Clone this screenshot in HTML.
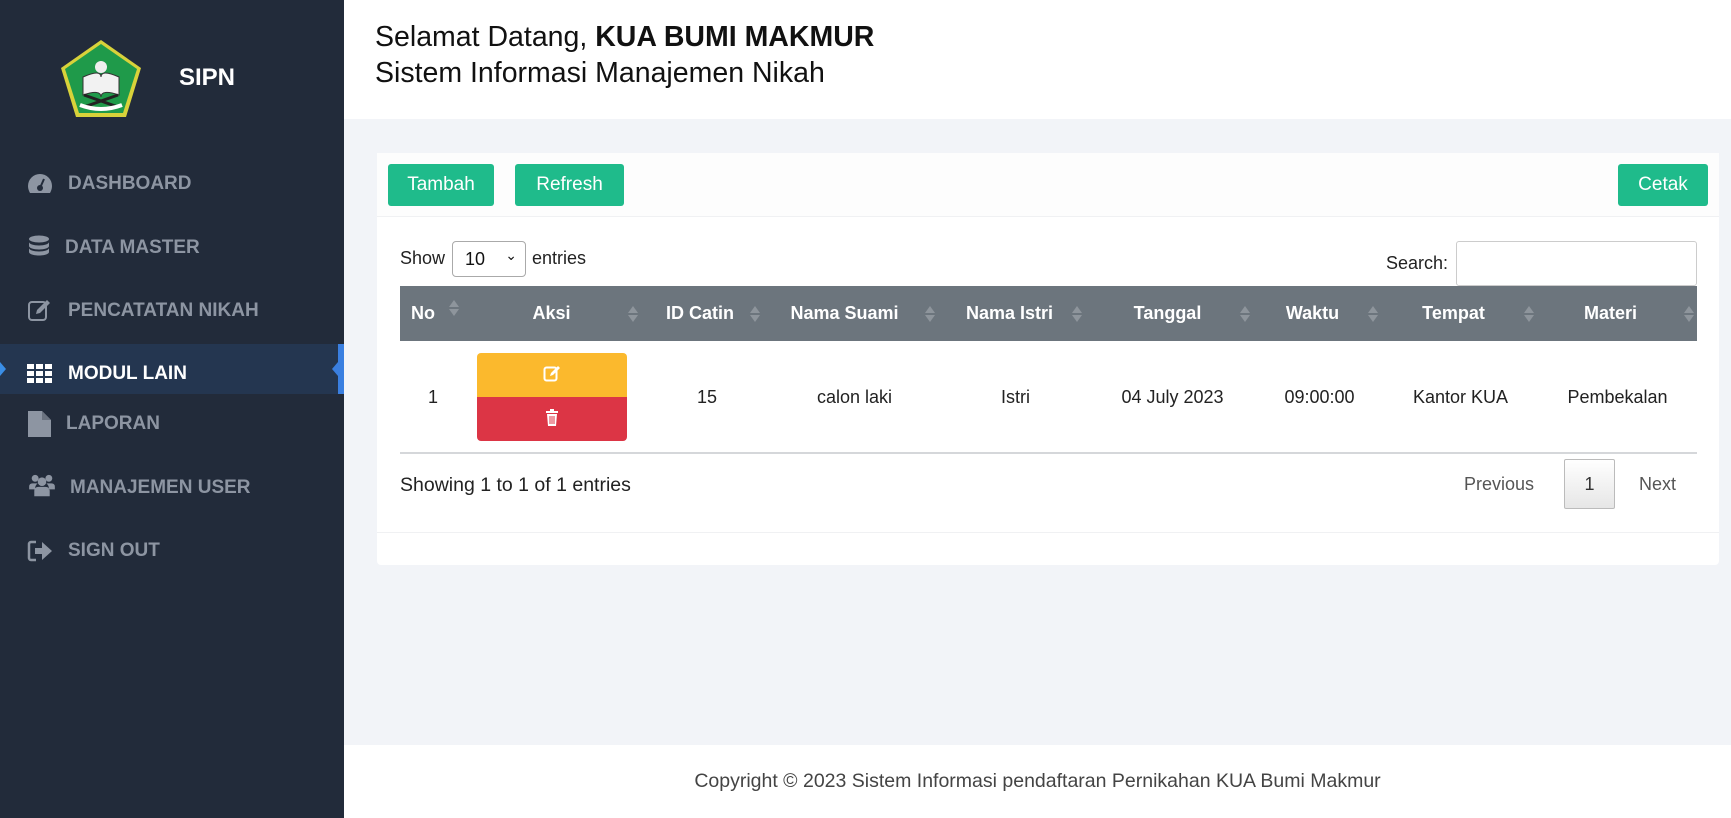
<!DOCTYPE html>
<html><head><meta charset="utf-8"><style>
*{box-sizing:border-box;margin:0;padding:0}
body{width:1731px;height:818px;overflow:hidden;font-family:"Liberation Sans",Arial,sans-serif;background:#f2f4f8;position:relative}
.abs{position:absolute}
#side{left:0;top:0;width:344px;height:818px;background:#222b3a}
.mi{position:absolute;left:68px;color:#8d95a2;font-weight:bold;font-size:19px;line-height:22px}
.ic{position:absolute;left:27px;width:26px;height:24px}
#hdr{left:344px;top:0;width:1387px;height:119px;background:#fff}
.t1{left:375px;font-size:28.5px;color:#111;line-height:32px}
#card{left:377px;top:153px;width:1342px;height:412px;background:#fff;border-radius:4px}
.btn{position:absolute;top:164px;height:42px;background:#1fbb8b;color:#fff;font-size:19px;line-height:42px;text-align:center;border-radius:3px}
.th{position:absolute;top:286px;height:55px;line-height:55px;color:#fff;font-weight:bold;font-size:18px;text-align:center}
.td{position:absolute;top:341px;height:112px;line-height:112px;color:#222;font-size:18px;text-align:center}
.sort{position:absolute;top:20px;width:10px;height:16px}
.sort:before{content:"";position:absolute;left:0;top:0;border:5px solid transparent;border-bottom:7px solid #8e959c;border-top:0}
.sort:after{content:"";position:absolute;left:0;top:9px;border:5px solid transparent;border-top:7px solid #8e959c;border-bottom:0}
</style></head><body>
<div id="side" class="abs"></div>
<svg class="abs" style="left:58px;top:37px" width="86" height="84" viewBox="0 0 86 84">
<polygon points="43,3 83,31 68,80 18,80 3,31" fill="#d8d23a"/>
<polygon points="43,7 79,32 65,76 21,76 7,32" fill="#1f9a4a"/>
<path d="M25 40 q18 -8 18 0 q0 -8 18 0 v18 q-18 -6 -18 2 q0 -8 -18 -2z" fill="#f2f2f2" stroke="#333" stroke-width="1"/>
<circle cx="43" cy="30" r="6" fill="#eee"/>
<path d="M26 70 l34 -12 M60 70 l-34 -12" stroke="#222" stroke-width="3"/>
<path d="M22 68 q21 8 42 0" stroke="#fff" stroke-width="4" fill="none"/>
</svg>
<div class="abs" style="left:179px;top:64px;color:#fff;font-weight:bold;font-size:24px">SIPN</div>

<svg class="ic" style="top:171px" viewBox="0 0 26 24"><path d="M13 3a12 12 0 0 0-12 12c0 3 1 5 2 7h20c1-2 2-4 2-7A12 12 0 0 0 13 3z" fill="#8d95a2"/><circle cx="13" cy="17" r="3" fill="#222b3a"/><path d="M13 17l4-9" stroke="#222b3a" stroke-width="2"/></svg>
<div class="mi" style="top:173px">DASHBOARD</div>
<svg class="ic" style="top:235px" viewBox="0 0 26 24"><ellipse cx="12" cy="4" rx="10" ry="3.5" fill="#8d95a2"/><path d="M2 7v4c0 2 4.5 3.5 10 3.5s10-1.5 10-3.5V7c0 2-4.5 3.5-10 3.5S2 9 2 7zM2 13v4c0 2 4.5 3.5 10 3.5s10-1.5 10-3.5v-4c0 2-4.5 3.5-10 3.5S2 15 2 13z" fill="#8d95a2"/></svg>
<div class="mi" style="top:237px;left:65px">DATA MASTER</div>
<svg class="ic" style="top:298px" viewBox="0 0 26 24"><rect x="2" y="4" width="17" height="18" rx="3" fill="none" stroke="#8d95a2" stroke-width="2"/><path d="M9 16l1-4 10-10 3 3-10 10z" fill="#8d95a2"/></svg>
<div class="mi" style="top:300px">PENCATATAN NIKAH</div>
<div class="abs" style="left:0;top:344px;width:344px;height:50px;background:#243650"></div>
<div class="abs" style="left:0;top:362px;border:7px solid transparent;border-left:6px solid #3a8ee6;border-right:0"></div>
<div class="abs" style="left:338px;top:344px;width:6px;height:50px;background:#3a7fe0"></div>
<div class="abs" style="left:332px;top:362px;border:7px solid transparent;border-right:6px solid #3a7fe0;border-left:0"></div>
<svg class="ic" style="top:362px" viewBox="0 0 26 24"><g fill="#fff"><rect x="0" y="2" width="7" height="5"/><rect x="9" y="2" width="7" height="5"/><rect x="18" y="2" width="7" height="5"/><rect x="0" y="9" width="7" height="5"/><rect x="9" y="9" width="7" height="5"/><rect x="18" y="9" width="7" height="5"/><rect x="0" y="16" width="7" height="5"/><rect x="9" y="16" width="7" height="5"/><rect x="18" y="16" width="7" height="5"/></g></svg>
<div class="mi" style="top:363px;color:#fff">MODUL LAIN</div>
<svg class="ic" style="top:410px;height:28px" viewBox="0 0 26 28"><path d="M1 1h14l9 9v17H1z" fill="#8d95a2"/><path d="M15 1v9h9" fill="#6b7380"/></svg>
<div class="mi" style="top:413px;left:66px">LAPORAN</div>
<svg class="ic" style="top:474px;width:30px" viewBox="0 0 30 28"><g fill="#8d95a2"><circle cx="7" cy="5" r="4"/><circle cx="23" cy="5" r="4"/><circle cx="15" cy="9" r="5"/><path d="M0 15q0-4 4-4h6q-3 2-3 6v1H0zM30 15q0-4-4-4h-6q3 2 3 6v1h7zM6 26v-6q0-5 5-5h8q5 0 5 5v6z"/></g></svg>
<div class="mi" style="top:477px;left:70px">MANAJEMEN USER</div>
<svg class="ic" style="top:539px" viewBox="0 0 26 24"><path d="M9 3H4a2 2 0 0 0-2 2v14a2 2 0 0 0 2 2h5" stroke="#8d95a2" stroke-width="2.5" fill="none"/><path d="M8 9h7V3l10 9-10 9v-6H8z" fill="#8d95a2"/></svg>
<div class="mi" style="top:540px">SIGN OUT</div>

<div id="hdr" class="abs"></div>
<div class="abs t1" style="top:21px">Selamat Datang, <b>KUA BUMI MAKMUR</b></div>
<div class="abs t1" style="top:57px">Sistem Informasi Manajemen Nikah</div>

<div id="card" class="abs"></div>
<div class="abs" style="left:377px;top:153px;width:1342px;height:64px;background:#fdfdfd;border-bottom:1px solid #f0f1f3"></div>
<div class="btn" style="left:388px;width:106px">Tambah</div>
<div class="btn" style="left:515px;width:109px">Refresh</div>
<div class="btn" style="left:1618px;width:90px">Cetak</div>

<div class="abs" style="left:400px;top:248px;font-size:18px;color:#222">Show</div>
<div class="abs" style="left:452px;top:241px;width:74px;height:36px;border:1px solid #aaa;border-radius:4px;font-size:18px;padding:7px 0 0 12px;color:#111">10<span style="position:absolute;right:8px;top:5px;font-size:14px">&#8964;</span></div>
<div class="abs" style="left:532px;top:248px;font-size:18px;color:#222">entries</div>
<div class="abs" style="left:1386px;top:253px;font-size:18px;color:#222">Search:</div>
<div class="abs" style="left:1456px;top:241px;width:241px;height:45px;border:1px solid #ccc;border-radius:3px;background:#fff"></div>

<div class="abs" style="left:400px;top:286px;width:1297px;height:55px;background:#6c757d"></div>
<div class="th" style="left:400px;width:66px;padding-right:20px">No</div><div class="sort" style="left:449px;top:300px;opacity:1"></div>
<div class="th" style="left:466px;width:181px;padding-right:10px">Aksi</div><div class="sort" style="left:628px;top:306px"></div>
<div class="th" style="left:647px;width:120px;padding-right:14px">ID Catin</div><div class="sort" style="left:750px;top:306px"></div>
<div class="th" style="left:767px;width:175px;padding-right:20px">Nama Suami</div><div class="sort" style="left:925px;top:306px"></div>
<div class="th" style="left:942px;width:147px;padding-right:12px">Nama Istri</div><div class="sort" style="left:1072px;top:306px"></div>
<div class="th" style="left:1089px;width:167px;padding-right:10px">Tanggal</div><div class="sort" style="left:1240px;top:306px"></div>
<div class="th" style="left:1256px;width:127px;padding-right:14px">Waktu</div><div class="sort" style="left:1368px;top:306px"></div>
<div class="th" style="left:1383px;width:155px;padding-right:14px">Tempat</div><div class="sort" style="left:1524px;top:306px"></div>
<div class="th" style="left:1538px;width:159px;padding-right:14px">Materi</div><div class="sort" style="left:1684px;top:306px"></div>

<div class="td" style="left:400px;width:66px">1</div>
<div class="abs" style="left:477px;top:353px;width:150px;height:44px;background:#fbb92d;border-radius:4px 4px 0 0"></div>
<svg class="abs" style="left:543px;top:364px" width="18" height="18" viewBox="0 0 18 18"><rect x="1.5" y="3.5" width="12" height="13" rx="2" fill="none" stroke="#fff" stroke-width="2"/><path d="M7 12l1-3 7-7 2 2-7 7z" fill="#fff"/></svg>
<div class="abs" style="left:477px;top:397px;width:150px;height:44px;background:#dc3545;border-radius:0 0 4px 4px"></div>
<svg class="abs" style="left:545px;top:409px" width="14" height="18" viewBox="0 0 14 18"><rect x="1" y="2" width="12" height="2" fill="#fff"/><rect x="5" y="0" width="4" height="2" fill="#fff"/><path d="M2 5h10l-1 12H3z" fill="#fff"/><path d="M5 7v8M7 7v8M9 7v8" stroke="#dc3545" stroke-width="1"/></svg>
<div class="td" style="left:647px;width:120px">15</div>
<div class="td" style="left:767px;width:175px">calon laki</div>
<div class="td" style="left:942px;width:147px">Istri</div>
<div class="td" style="left:1089px;width:167px">04 July 2023</div>
<div class="td" style="left:1256px;width:127px">09:00:00</div>
<div class="td" style="left:1383px;width:155px">Kantor KUA</div>
<div class="td" style="left:1538px;width:159px">Pembekalan</div>
<div class="abs" style="left:400px;top:452px;width:1297px;height:2px;background:#d5d7da"></div>

<div class="abs" style="left:400px;top:474px;font-size:19.5px;color:#222">Showing 1 to 1 of 1 entries</div>
<div class="abs" style="left:1464px;top:474px;font-size:18px;color:#555">Previous</div>
<div class="abs" style="left:1564px;top:459px;width:51px;height:50px;border:1px solid #bbb;border-radius:2px;background:linear-gradient(#fff,#e6e6e6);text-align:center;line-height:48px;font-size:18px;color:#333">1</div>
<div class="abs" style="left:1639px;top:474px;font-size:18px;color:#555">Next</div>
<div class="abs" style="left:377px;top:532px;width:1342px;height:1px;background:#f0f1f3"></div>

<div class="abs" style="left:344px;top:745px;width:1387px;height:73px;background:#fff"></div>
<div class="abs" style="left:344px;top:770px;width:1387px;text-align:center;font-size:19.5px;color:#444">Copyright © 2023 Sistem Informasi pendaftaran Pernikahan KUA Bumi Makmur</div>
</body></html>
